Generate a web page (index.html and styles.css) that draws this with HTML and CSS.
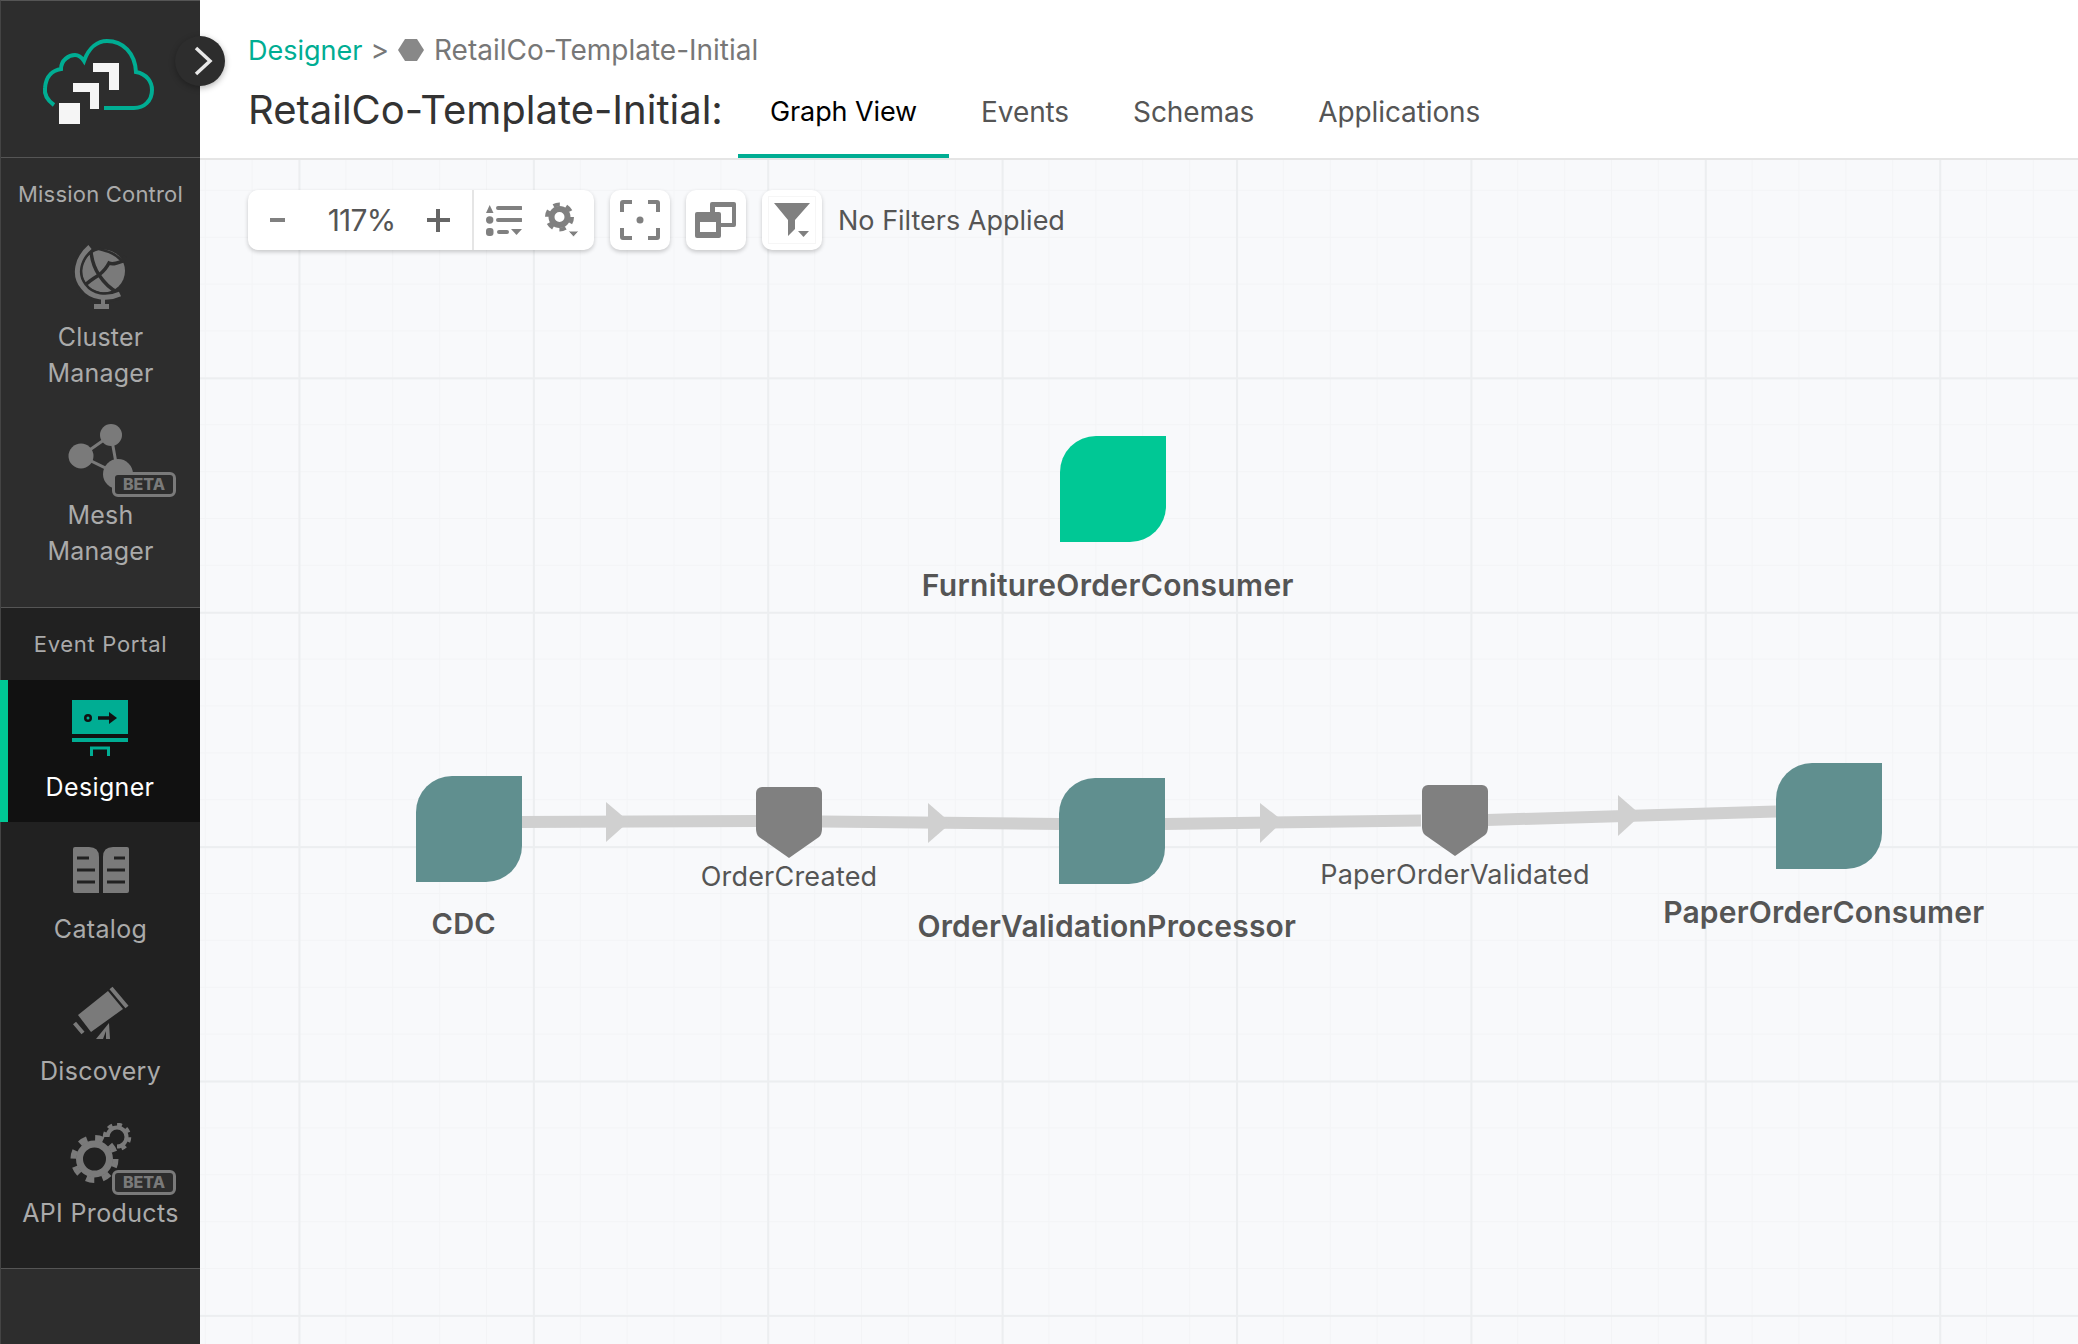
FILE: index.html
```html
<!DOCTYPE html>
<html lang="en">
<head>
    <meta charset="UTF-8">
    <title>RetailCo-Template-Initial</title>
    <link rel="stylesheet" href="styles.css">
</head>
<body>
<div class="app">
    <!-- Barra lateral -->
    <aside class="sidebar">
        <div class="logo-box">
            <svg class="logo" viewBox="40 30 120 98">
                <path d="M53 105C46 100 43 95 44 88C45 75 53 70 60 69C60 60 68 55 74 55C78 55 81 58 83 61C88 47 97 41 106 41C122 41 134 53 135 72C146 74 151 82 151 90C151 101 143 108 133 108L103 108" fill="none" stroke="#00ad93" stroke-width="4"/>
                <path d="M58 103H79V124H58zM72 83H98V109H89V92H72zM92 63H118V90H108V72H92z" fill="#f5f5f5"/>
            </svg>
        </div>
        <section class="nav-section">
            <div class="nav-title">Mission Control</div>
            <div class="nav-item">
                <div class="nav-icon">
                    <svg width="60" height="66" viewBox="70 246 60 66">
                        <circle cx="102.500" cy="272" r="21.500" fill="#7a7a7a"/>
                        <path d="M90 253C91 262 94 270 98 276C104 285 110 290 116 293" fill="none" stroke="#2d2d2d" stroke-width="3.500"/>
                        <path d="M82 288C88 282 93 279 98 276C103 272 106 268 108 264C112 266 116 264 122 262L124 257" fill="none" stroke="#2d2d2d" stroke-width="3.500"/>
                        <path d="M98 250C106 252 114 254 121 262" fill="none" stroke="#2d2d2d" stroke-width="2.500"/>
                        <path d="M89 248C76 259 72 276 82 288C90 299 106 301 119 295" fill="none" stroke="#2d2d2d" stroke-width="10"/>
                        <path d="M89 248C76 259 72 276 82 288C90 299 106 301 119 295" fill="none" stroke="#7a7a7a" stroke-width="5"/>
                        <path d="M100 298H104V305H100zM93 305H108V310H93z" fill="#7a7a7a"/>
                    </svg>
                </div>
                <div class="nav-label">Cluster<br>Manager</div>
            </div>
            <div class="nav-item">
                <div class="nav-icon">
                    <svg width="68" height="68" viewBox="66 423 68 68">
                        <path d="M110 436L80 457L117 475z" fill="none" stroke="#7a7a7a" stroke-width="3"/>
                        <circle cx="110" cy="436" r="11" fill="#7a7a7a"/>
                        <circle cx="80" cy="457" r="12.500" fill="#7a7a7a"/>
                        <circle cx="117" cy="475" r="15" fill="#7a7a7a"/>
                    </svg>
                    <span class="beta beta-mesh">BETA</span>
                </div>
                <div class="nav-label">Mesh<br>Manager</div>
            </div>
        </section>
        <section class="nav-section event-portal">
            <div class="nav-title">Event Portal</div>
            <div class="nav-item active">
                <div class="nav-icon">
                    <svg width="56" height="56" viewBox="72 700 56 56">
                        <path d="M72 700H128V734H72zM72 738H128V742H72z" fill="#00ad93"/>
                        <path d="M91.500 756V748H108.500V756" fill="none" stroke="#00ad93" stroke-width="3"/>
                        <circle cx="88" cy="718" r="4" fill="#111"/>
                        <circle cx="88" cy="718" r="1.500" fill="#00ad93"/>
                        <path d="M98 718H113" stroke="#111" stroke-width="3.500"/>
                        <path d="M109 712L117 718L109 724z" fill="#111"/>
                    </svg>
                </div>
                <div class="nav-label">Designer</div>
            </div>
            <div class="nav-item">
                <div class="nav-icon">
                    <svg width="56" height="46" viewBox="72 848 56 46">
                        <path d="M74 848H88Q98 848 98 858V894H74Q72 894 72 892V850Q72 848 74 848zM112 848H126Q128 848 128 850V892Q128 894 126 894H102V858Q102 848 112 848z" fill="#7a7a7a"/>
                        <path d="M76 859H88M76 871H94M76 883H94M113 859H124M106 871H124M106 883H124" stroke="#212121" stroke-width="3"/>
                    </svg>
                </div>
                <div class="nav-label">Catalog</div>
            </div>
            <div class="nav-item">
                <div class="nav-icon">
                    <svg width="56" height="54" viewBox="72 984 56 54">
                        <path d="M77 1014L107 990L122 1008L90 1031z" fill="#7a7a7a"/>
                        <path d="M73.500 1022L82 1032M110 987L126 1006" stroke="#7a7a7a" stroke-width="4"/>
                        <path d="M95 1038L108 1022L109 1038H105L105 1030L102 1038z" fill="#7a7a7a"/>
                    </svg>
                </div>
                <div class="nav-label">Discovery</div>
            </div>
            <div class="nav-item">
                <div class="nav-icon">
                    <svg width="62" height="62" viewBox="69 1124 62 62">
                        <circle cx="93.500" cy="1160" r="15" fill="none" stroke="#7a7a7a" stroke-width="7"/>
                        <circle cx="93.500" cy="1160" r="21" fill="none" stroke="#7a7a7a" stroke-width="6" stroke-dasharray="8.250 8.250"/>
                        <path d="M106.500 1138A9.500 9.500 0 1 1 116 1147.500" fill="none" stroke="#7a7a7a" stroke-width="4"/>
                        <path d="M103.500 1138A12.500 12.500 0 1 1 116 1150.500" fill="none" stroke="#7a7a7a" stroke-width="3.500" stroke-dasharray="4.900 4.900"/>
                    </svg>
                    <span class="beta beta-api">BETA</span>
                </div>
                <div class="nav-label">API Products</div>
            </div>
        </section>
    </aside>
    <button class="collapse-btn">
        <svg width="20" height="30" viewBox="0 0 20 30"><path d="M3 2L17 15L3 28" fill="none" stroke="#e8e8e8" stroke-width="3.500"/></svg>
    </button>

    <main class="main">
        <header class="top">
            <div class="crumbs">
                <a class="crumb-link">Designer</a>
                <span class="crumb-sep">&gt;</span>
                <svg class="crumb-hex" width="26" height="22" viewBox="0 0 26 22"><path d="M7 0H19L26 11L19 22H7L0 11z" fill="#888"/></svg>
                <span>RetailCo-Template-Initial</span>
            </div>
            <div class="title-row">
                <h1>RetailCo-Template-Initial:</h1>
                <nav class="tabs">
                    <a class="tab tab-on">Graph View</a>
                    <a class="tab">Events</a>
                    <a class="tab">Schemas</a>
                    <a class="tab">Applications</a>
                </nav>
            </div>
        </header>

        <div class="canvas">
            <div class="toolbar">
                <div class="tool-card zoom-card">
                    <div class="zoom-part">
                        <span class="zoom-minus"></span>
                        <span class="zoom-value">117%</span>
                        <span class="zoom-plus"></span>
                    </div>
                    <div class="tools-part">
                        <svg width="36" height="32" viewBox="0 0 36 32">
                            <path d="M3.700 1L7.500 9H0z" fill="#808080"/>
                            <path d="M12 4H35M12 16H35M13 28H21" stroke="#808080" stroke-width="4" stroke-linecap="round"/>
                            <circle cx="3.700" cy="16" r="3.700" fill="#808080"/>
                            <rect x="0" y="24" width="7.500" height="8" rx="3" fill="#808080"/>
                            <path d="M25 25H36L30.500 31z" fill="#808080"/>
                        </svg>
                        <svg width="36" height="36" viewBox="0 0 36 36">
                            <circle cx="14.500" cy="15" r="8" fill="none" stroke="#808080" stroke-width="6"/>
                            <circle cx="14.500" cy="15" r="12.500" fill="none" stroke="#808080" stroke-width="4" stroke-dasharray="6.500 6.590"/>
                            <path d="M23 29H34L28.500 35z" fill="#808080" stroke="#fff" stroke-width="1"/>
                        </svg>
                    </div>
                </div>
                <div class="tool-card tool-btn">
                    <svg width="40" height="40" viewBox="0 0 40 40">
                        <path d="M12 2H3Q2 2 2 3V12M28 2H37Q38 2 38 3V12M12 38H3Q2 38 2 37V28M28 38H37Q38 38 38 37V28" fill="none" stroke="#808080" stroke-width="4"/>
                        <circle cx="20" cy="20" r="3.500" fill="#808080"/>
                    </svg>
                </div>
                <div class="tool-card tool-btn">
                    <svg width="42" height="37" viewBox="0 0 42 37">
                        <rect x="15" y="0" width="26" height="25" rx="2" fill="#808080"/>
                        <rect x="20" y="5" width="17" height="16" fill="#fff"/>
                        <rect x="0" y="10" width="26" height="26" rx="2" fill="#808080"/>
                        <rect x="5" y="20" width="16" height="10" fill="#fff"/>
                    </svg>
                </div>
                <div class="tool-card tool-btn">
                    <div class="filter-box">
                        <svg width="36" height="34" viewBox="0 0 36 34">
                            <path d="M0 0H36L21 17V26L14 33V17z" fill="#808080"/>
                            <path d="M24 28H35L29.500 34z" fill="#808080"/>
                        </svg>
                    </div>
                </div>
                <span class="filter-text">No Filters Applied</span>
            </div>

            <!-- Grafo -->
            <svg class="edges" viewBox="200 160 1878 1184">
                <g fill="none" stroke="#d0d0d0" stroke-width="12">
                    <path d="M521 822L756 821"/>
                    <path d="M822 821.500L1059 824"/>
                    <path d="M1165 824L1421 820.500"/>
                    <path d="M1487 820L1776 811.500"/>
                </g>
                <g fill="#d0d0d0">
                    <path d="M606 802L629 821.500L606 842z"/>
                    <path d="M928 803L951 823L928 843z"/>
                    <path d="M1260 803L1283 821L1260 843z"/>
                    <path d="M1618 795L1641 815L1618 836z"/>
                </g>
            </svg>

            <div class="app-node node-furniture">
                <div class="app-shape shape-green"></div>
                <div class="app-label">FurnitureOrderConsumer</div>
            </div>
            <div class="app-node node-cdc">
                <div class="app-shape"></div>
                <div class="app-label">CDC</div>
            </div>
            <div class="app-node node-processor">
                <div class="app-shape"></div>
                <div class="app-label">OrderValidationProcessor</div>
            </div>
            <div class="app-node node-paper">
                <div class="app-shape"></div>
                <div class="app-label">PaperOrderConsumer</div>
            </div>
            <div class="event-node event-created">
                <svg width="66" height="71" viewBox="0 0 66 71"><path d="M6 0H60A6 6 0 0 1 66 6V42Q66 47 63 50L33 71L3 50Q0 47 0 42V6A6 6 0 0 1 6 0z" fill="#808080"/></svg>
                <div class="event-label">OrderCreated</div>
            </div>
            <div class="event-node event-validated">
                <svg width="66" height="71" viewBox="0 0 66 71"><path d="M6 0H60A6 6 0 0 1 66 6V42Q66 47 63 50L33 71L3 50Q0 47 0 42V6A6 6 0 0 1 6 0z" fill="#808080"/></svg>
                <div class="event-label">PaperOrderValidated</div>
            </div>
        </div>
    </main>
</div>
</body>
</html>
```

FILE: styles.css
```css
/* General */
* {
    box-sizing: border-box;
}

body {
    margin: 0;
    font-family: "Inter", "Liberation Sans", sans-serif;
    color: #333;
    overflow: hidden;
}

.app {
    display: flex;
    height: 100vh;
    position: relative;
}

/* Sidebar */
.sidebar {
    width: 200px;
    flex-shrink: 0;
    background-color: #2d2d2d;
    border-top: 1px solid #555;
    border-left: 1px solid #444;
    color: #aaa;
}

.logo-box {
    height: 157px;
    border-bottom: 1px solid #555;
    display: flex;
    align-items: center;
    justify-content: center;
}

.logo {
    width: 120px;
    height: 98px;
}

.nav-section {
    height: 449px;
}

.event-portal {
    height: 662px;
    background-color: #212121;
    border-top: 1px solid #555;
    border-bottom: 1px solid #555;
}

.nav-title {
    height: 72px;
    line-height: 72px;
    font-size: 22px;
    letter-spacing: 0.2px;
    text-align: center;
}

.event-portal .nav-title {
    letter-spacing: 0.7px;
}

.nav-item {
    display: flex;
    flex-direction: column;
    align-items: center;
    padding: 6px 0 17px;
}

.nav-icon {
    position: relative;
    width: 100%;
    height: 84px;
    display: flex;
    align-items: center;
    justify-content: center;
    flex-shrink: 0;
}

.nav-label {
    margin-top: -1px;
    font-size: 25px;
    line-height: 36px;
    letter-spacing: 0.2px;
    text-align: center;
    white-space: nowrap;
}

.event-portal .nav-label {
    margin-top: 0;
    line-height: 35px;
    letter-spacing: 0.35px;
}

.nav-item.active {
    background-color: #111;
    border-left: 8px solid #00c895;
    margin-left: -1px;
    color: #fff;
    padding-right: 8px;
}

.beta {
    position: absolute;
    width: 64px;
    height: 25px;
    left: 111px;
    border: 3px solid #7a7a7a;
    border-radius: 6px;
    background-color: #2d2d2d;
    color: #7a7a7a;
    font-size: 16px;
    font-weight: 800;
    line-height: 19px;
    text-align: center;
}

.beta-mesh {
    top: 58px;
}

.beta-api {
    top: 58px;
}

.collapse-btn {
    position: absolute;
    left: 175px;
    top: 36px;
    width: 50px;
    height: 50px;
    padding: 0 0 0 6px;
    border: none;
    border-radius: 50%;
    background-color: #2d2d2d;
    box-shadow: 0 2px 6px rgba(0, 0, 0, 0.3);
    display: flex;
    align-items: center;
    justify-content: center;
    z-index: 2;
}

/* Main */
.main {
    flex: 1;
    display: flex;
    flex-direction: column;
    min-width: 0;
}

.top {
    height: 160px;
    background-color: #fff;
    border-bottom: 2px solid #e5e5e5;
    padding: 32px 0 0 48px;
}

.crumbs {
    display: flex;
    align-items: center;
    height: 36px;
    font-size: 28px;
    color: #777;
}

.crumb-link {
    font-size: 27px;
    color: #00ad93;
}

.crumb-sep {
    margin-left: 8px;
}

.crumb-hex {
    margin: 0 10px 0 9px;
}

.title-row {
    display: flex;
    height: 90px;
}

h1 {
    margin: 0;
    padding-top: 19px;
    font-size: 40px;
    line-height: 46px;
    font-weight: 400;
    width: 490px;
    white-space: nowrap;
}

.tabs {
    display: flex;
}

.tab {
    padding: 26px 32px 0;
    font-size: 28px;
    line-height: 36px;
    letter-spacing: -0.1px;
    color: #555;
    border-bottom: 4px solid transparent;
}

.tab-on {
    font-size: 27px;
    color: #000;
    border-bottom-color: #00ad93;
}

/* Canvas */
.canvas {
    flex: 1;
    position: relative;
    padding: 30px 0 0 48px;
    background-color: #f8f9fb;
    background-image:
        linear-gradient(to right, #eceef0 2px, transparent 2px),
        linear-gradient(to bottom, #eceef0 2px, transparent 2px),
        linear-gradient(to right, #f3f4f6 1px, transparent 1px),
        linear-gradient(to bottom, #f3f4f6 1px, transparent 1px);
    background-size: 234.4px 234.4px, 234.4px 234.4px, 46.88px 46.88px, 46.88px 46.88px;
    background-position: 98.5px -17px, 98.5px -17px, 98.5px -17px, 98.5px -17px;
}

.toolbar {
    display: flex;
    align-items: center;
    gap: 16px;
    position: relative;
    z-index: 1;
}

.tool-card {
    background-color: #fff;
    border-radius: 10px;
    box-shadow: 0 2px 4px rgba(0, 0, 0, 0.2);
    height: 60px;
}

.zoom-card {
    display: flex;
    width: 346px;
}

.zoom-part {
    width: 226px;
    display: flex;
    align-items: center;
    justify-content: space-between;
    padding: 0 22px;
    border-right: 2px solid #e5e5e5;
}

.zoom-minus {
    width: 15px;
    height: 4px;
    background-color: #808080;
}

.zoom-plus {
    width: 23px;
    height: 23px;
    background:
        linear-gradient(#666, #666) center / 23px 4px no-repeat,
        linear-gradient(#666, #666) center / 4px 23px no-repeat;
}

.zoom-value {
    margin-left: 11px;
    font-size: 30px;
    letter-spacing: -0.8px;
    color: #555;
}

.tools-part {
    flex: 1;
    display: flex;
    align-items: center;
    justify-content: space-between;
    padding: 0 13px 0 12px;
}

.tool-btn {
    width: 60px;
    display: flex;
    align-items: center;
    justify-content: center;
}

.filter-box {
    width: 48px;
    height: 48px;
    border: 1px solid #f6f6f6;
    display: flex;
    align-items: center;
    justify-content: center;
}

.filter-text {
    font-size: 27px;
    color: #555;
}

.edges {
    position: absolute;
    left: 0;
    top: 0;
    width: 100%;
    height: 100%;
}

/* Nodos */
.app-node {
    position: absolute;
    width: 105.5px;
    display: flex;
    flex-direction: column;
    align-items: center;
}

.app-shape {
    width: 105.5px;
    height: 105.5px;
    flex-shrink: 0;
    background-color: #608f8f;
    border-radius: 36px 0 36px 0;
}

.shape-green {
    background-color: #00c895;
}

.app-label {
    margin: 25px 10px 0 0;
    font-size: 30px;
    line-height: 36px;
    font-weight: 600;
    letter-spacing: 0.2px;
    color: #555;
    white-space: nowrap;
}

.node-furniture .app-label {
    letter-spacing: 0.35px;
}

.node-processor .app-label {
    margin-top: 24px;
}

.node-cdc .app-label {
    margin-top: 24px;
    font-size: 29px;
}

.node-furniture { left: 860px; top: 276px; }
.node-cdc { left: 216px; top: 616px; }
.node-processor { left: 859px; top: 618px; }
.node-paper { left: 1576px; top: 603px; }

.event-node {
    position: absolute;
    width: 66px;
    display: flex;
    flex-direction: column;
    align-items: center;
}

.event-label {
    margin-top: 1px;
    font-size: 27px;
    line-height: 36px;
    letter-spacing: 0.2px;
    color: #555;
    white-space: nowrap;
}

.event-created { left: 556px; top: 627px; }
.event-validated { left: 1222px; top: 625px; }
```
